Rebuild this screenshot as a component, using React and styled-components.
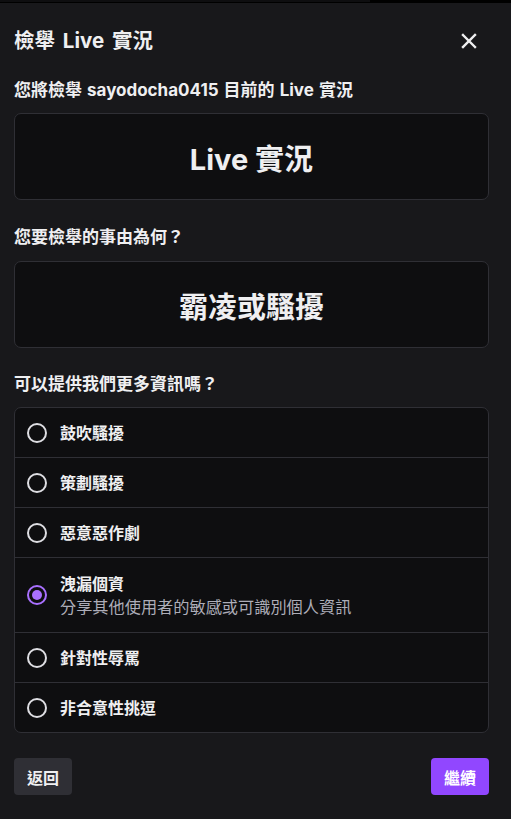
import React from 'react'
import styled, { createGlobalStyle } from 'styled-components'

const GlobalStyle = createGlobalStyle`
  body {
    margin: 0;
    background: #18181b;
    color: #efeff1;
    font-family: Inter, 'Noto Sans CJK TC', 'Noto Sans', sans-serif;
  }
`

const reasons = [
  { label: '鼓吹騷擾' },
  { label: '策劃騷擾' },
  { label: '惡意惡作劇' },
  { label: '洩漏個資', desc: '分享其他使用者的敏感或可識別個人資訊', selected: true },
  { label: '針對性辱罵' },
  { label: '非合意性挑逗' },
]

export default function App() {
  return (
    <>
      <GlobalStyle />
      <TopStrip>
        <TopStripFill />
      </TopStrip>
      <Dialog>
        <Header>
          <Title>檢舉 Live 實況</Title>
          <CloseButton aria-label="close">
            <svg width="16" height="16" viewBox="0 0 16 16">
              <path d="M2 2 L14 14 M14 2 L2 14" stroke="#efeff1" strokeWidth="2.4" strokeLinecap="square" />
            </svg>
          </CloseButton>
        </Header>

        <Label $mt={19}>您將檢舉 sayodocha0415 目前的 Live 實況</Label>
        <BigCard $mt={13}>Live 實況</BigCard>

        <Label $mt={27}>您要檢舉的事由為何？</Label>
        <BigCard $mt={14}>霸凌或騷擾</BigCard>

        <Label $mt={26}>可以提供我們更多資訊嗎？</Label>
        <List>
          {reasons.map((r) => (
            <Row key={r.label} $tall={!!r.desc}>
              <Radio $selected={r.selected} />
              <RowText>
                <RowLabel>{r.label}</RowLabel>
                {r.desc && <RowDesc>{r.desc}</RowDesc>}
              </RowText>
            </Row>
          ))}
        </List>

        <Footer>
          <Button>返回</Button>
          <Button $primary>繼續</Button>
        </Footer>
      </Dialog>
    </>
  )
}

const TopStrip = styled.div`
  height: 3px;
  background: #000;
`
const TopStripFill = styled.div`
  width: 370px;
  height: 2px;
  background: #0e0e10;
`
const Dialog = styled.div`
  padding: 0 22px 0 14px;
`
const Header = styled.div`
  display: flex;
  align-items: center;
  justify-content: space-between;
  height: 40px;
  margin-top: 18px;
`
const Title = styled.h1`
  margin: 0;
  font-size: 20.5px;
  font-weight: 700;
  line-height: 28px;
  word-spacing: 3px;
`
const CloseButton = styled.button`
  background: none;
  border: 0;
  padding: 0;
  width: 28px;
  height: 28px;
  display: flex;
  align-items: center;
  justify-content: center;
  margin-right: 6px;
`
const Label = styled.div`
  margin-top: ${(p) => p.$mt}px;
  font-size: 17px;
  font-weight: 700;
  line-height: 20px;
  word-spacing: 1px;
`
const BigCard = styled.div`
  margin-top: ${(p) => p.$mt}px;
  height: 85px;
  background: #0e0e10;
  border: 1px solid #2f2f35;
  border-radius: 7px;
  display: flex;
  align-items: center;
  justify-content: center;
  font-size: 29px;
  font-weight: 700;
`
const List = styled.div`
  margin-top: 13px;
  background: #0e0e10;
  border: 1px solid #2f2f35;
  border-radius: 7px;
`
const Row = styled.div`
  display: flex;
  align-items: center;
  gap: 13px;
  height: ${(p) => (p.$tall ? 74 : 49)}px;
  padding: 0 12px;
  & + & {
    border-top: 1px solid #2f2f35;
  }
`
const Radio = styled.span`
  box-sizing: border-box;
  flex: none;
  width: 20px;
  height: 20px;
  border-radius: 50%;
  border: 2px solid ${(p) => (p.$selected ? '#a970ff' : '#dedee3')};
  display: flex;
  align-items: center;
  justify-content: center;
  &::after {
    content: '';
    display: ${(p) => (p.$selected ? 'block' : 'none')};
    width: 10px;
    height: 10px;
    border-radius: 50%;
    background: #a970ff;
  }
`
const RowText = styled.div`
  display: flex;
  flex-direction: column;
  gap: 3px;
`
const RowLabel = styled.div`
  font-size: 16px;
  font-weight: 700;
  line-height: 20px;
`
const RowDesc = styled.div`
  font-size: 16.2px;
  line-height: 20px;
  color: #adadb8;
`
const Footer = styled.div`
  margin-top: 25px;
  display: flex;
  justify-content: space-between;
`
const Button = styled.button`
  height: 37px;
  padding: 0 13px;
  border: 0;
  border-radius: 4px;
  font-family: inherit;
  font-size: 16px;
  font-weight: 700;
  color: ${(p) => (p.$primary ? '#fff' : '#efeff1')};
  background: ${(p) => (p.$primary ? '#9147ff' : '#2f2f35')};
`
